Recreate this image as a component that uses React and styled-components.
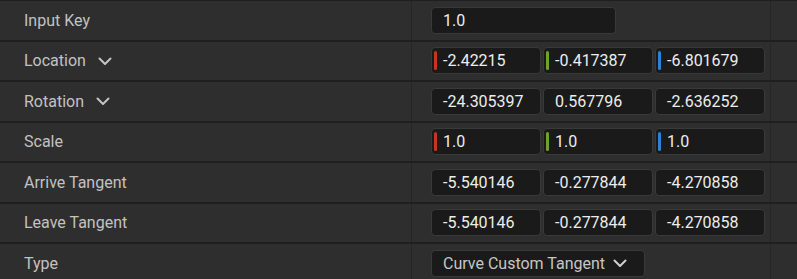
import React from "react";
import styled, { createGlobalStyle } from "styled-components";

const GlobalStyle = createGlobalStyle`
  body {
    margin: 0;
    background: #2e2e2e;
    font-family: Roboto, "Liberation Sans", sans-serif;
  }
`;

const rows = [
  { name: "Input Key", kind: "single", values: ["1.0"] },
  { name: "Location", expand: true, kind: "vector", axis: true, values: ["-2.42215", "-0.417387", "-6.801679"] },
  { name: "Rotation", expand: true, kind: "vector", values: ["-24.305397", "0.567796", "-2.636252"] },
  { name: "Scale", kind: "vector", axis: true, values: ["1.0", "1.0", "1.0"] },
  { name: "Arrive Tangent", kind: "vector", values: ["-5.540146", "-0.277844", "-4.270858"] },
  { name: "Leave Tangent", kind: "vector", values: ["-5.540146", "-0.277844", "-4.270858"] },
  { name: "Type", kind: "combo", values: ["Curve Custom Tangent"] },
];

const axisColors = ["#c4361f", "#6fa22d", "#2e80d9"];

const Chevron = ({ color = "#c4c4c4" }) => (
  <svg width="14" height="9" viewBox="0 0 14 9">
    <path d="M1.5 1.5 L7 7 L12.5 1.5" fill="none" stroke={color} strokeWidth="2" strokeLinecap="round" strokeLinejoin="round" />
  </svg>
);

const App = () => {
  return (
    <>
      <GlobalStyle />
      <Panel>
        {rows.map((row) => (
          <Row key={row.name}>
            <NameCell>
              <Label>{row.name}</Label>
              {row.expand && (
                <ExpandIcon>
                  <Chevron />
                </ExpandIcon>
              )}
            </NameCell>
            <ValueCell>
              {row.kind === "single" && (
                <Field width={185}>
                  <Value>{row.values[0]}</Value>
                </Field>
              )}
              {row.kind === "vector" &&
                row.values.map((v, i) => (
                  <Field key={i} width={110}>
                    {row.axis && <AxisBar color={axisColors[i]} />}
                    <Value>{v}</Value>
                  </Field>
                ))}
              {row.kind === "combo" && (
                <Field width={214}>
                  <ComboText>{row.values[0]}</ComboText>
                  <ComboIcon>
                    <Chevron color="#d0d0d0" />
                  </ComboIcon>
                </Field>
              )}
            </ValueCell>
            <Rest />
          </Row>
        ))}
      </Panel>
    </>
  );
};

export default App;

const Panel = styled.div`
  width: 797px;
  height: 279px;
  overflow: hidden;
  border-top: 1px solid #1f1f1f;
  box-sizing: border-box;
`;

const Row = styled.div`
  display: grid;
  grid-template-columns: 412px 359px 1fr;
  height: 38.5px;
  border-bottom: 2px solid #1f1f1f;
  background: #2e2e2e;
`;

const NameCell = styled.div`
  display: flex;
  align-items: center;
  padding-left: 24px;
  border-right: 1px solid #262626;
`;

const Label = styled.span`
  font-size: 16px;
  color: #c2c2c2;
`;

const ExpandIcon = styled.span`
  display: flex;
  margin-left: 12px;
  margin-top: 1px;
`;

const ValueCell = styled.div`
  display: flex;
  align-items: center;
  gap: 2px;
  padding-left: 19px;
  border-right: 1px solid #262626;
`;

const Rest = styled.div``;

const Field = styled.div`
  position: relative;
  display: flex;
  align-items: center;
  width: ${(p) => p.width}px;
  height: 27px;
  box-sizing: border-box;
  padding-left: 11px;
  background: #1a1a1a;
  border: 1px solid #393939;
  border-radius: 4px;
`;

const AxisBar = styled.span`
  position: absolute;
  left: 1.5px;
  top: 3px;
  width: 3.5px;
  height: 19px;
  border-radius: 2px;
  background: ${(p) => p.color};
`;

const Value = styled.span`
  font-size: 16px;
  color: #ededed;
`;

const ComboText = styled.span`
  font-size: 16px;
  color: #c6c6c6;
`;

const ComboIcon = styled.span`
  display: flex;
  margin-left: 8px;
  margin-top: 1px;
`;
